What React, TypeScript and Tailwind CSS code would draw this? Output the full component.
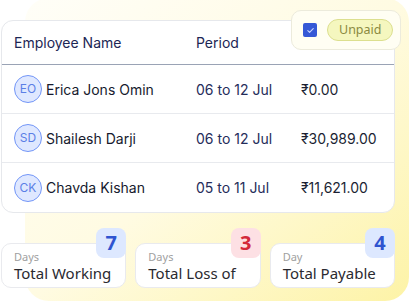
import React from "react";

interface Row {
  initials: string;
  name: string;
  period: string;
  amount: string;
}

const ROWS: Row[] = [
  { initials: "EO", name: "Erica Jons Omin", period: "06 to 12 Jul", amount: "₹0.00" },
  { initials: "SD", name: "Shailesh Darji", period: "06 to 12 Jul", amount: "₹30,989.00" },
  { initials: "CK", name: "Chavda Kishan", period: "05 to 11 Jul", amount: "₹11,621.00" },
];

const STATS = [
  { unit: "Days", label: "Total Working", value: "7", badge: "bg-[#dde8ff] text-[#2f54d0]" },
  { unit: "Days", label: "Total Loss of", value: "3", badge: "bg-[#fde0e4] text-[#d32a3a]" },
  { unit: "Day", label: "Total Payable", value: "4", badge: "bg-[#dde8ff] text-[#2f54d0]" },
];

export default function App() {
  return (
    <div className="relative w-[409px] h-[302px] overflow-hidden bg-white font-['Inter',sans-serif]">
      {/* yellow backdrop */}
      <div className="absolute left-[25px] top-[-2px] w-[384px] h-[303px] rounded-[24px] bg-gradient-to-br from-[#fffef8] via-[#fffbe2] to-[#fdf3a6]" />

      <div className="relative pt-[20px] pl-[1px] w-[395px]">
        <div className="bg-white border border-[#e6e8ec] rounded-[12px] overflow-hidden">
          <div className="grid grid-cols-[182px_105px_1fr] h-[44px] items-center px-[12px] border-b border-[#9aa3b5] text-[14px] text-[#1c2654]">
            <span>Employee Name</span>
            <span>Period</span>
            <span />
          </div>
          {ROWS.map((r, i) => (
            <div
              key={r.initials}
              className={`grid grid-cols-[182px_105px_1fr] h-[49px] items-center px-[12px] text-[14px] ${
                i < ROWS.length - 1 ? "border-b border-[#e8eaee]" : ""
              }`}
            >
              <div className="flex items-center gap-[4px]">
                <span className="w-[28px] h-[28px] rounded-full border border-[#7396f7] bg-[#dfe8ff] text-[#5b7fe6] text-[12px] flex items-center justify-center">
                  {r.initials}
                </span>
                <span className="text-[#161a2e]">{r.name}</span>
              </div>
              <span className="text-[#252c5a]">{r.period}</span>
              <span className="text-[#1b1f33]">{r.amount}</span>
            </div>
          ))}
        </div>

        <div className="grid grid-cols-3 gap-[9px] mt-[30px]">
          {STATS.map((s) => (
            <div
              key={s.label}
              className="relative h-[45px] bg-white border border-[#e9eaee] rounded-[10px] pl-[12px] pt-[7px] font-['Noto_Sans',sans-serif]"
            >
              <div className="text-[11px] leading-[12px] text-[#a0a0a0]">{s.unit}</div>
              <div className="text-[15px] leading-[20px] text-[#2a2a30]">{s.label}</div>
              <div
                className={`absolute right-[-1px] top-[-16px] w-[30px] h-[30px] rounded-[8px] flex items-center justify-center text-[20px] font-bold ${s.badge}`}
              >
                {s.value}
              </div>
            </div>
          ))}
        </div>
      </div>

      {/* unpaid filter popover */}
      <div className="absolute left-[291px] top-[10px] w-[110px] h-[40px] rounded-[10px] border border-[#ecebdc] bg-[#fffef3] flex items-center gap-[10px] pl-[11px]">
        <span className="w-[14px] h-[14px] rounded-[2px] bg-[#3558d6] flex items-center justify-center">
          <svg width="9" height="9" viewBox="0 0 10 10" fill="none">
            <path d="M2 5.2l2 2 4-4.4" stroke="#c9d4ff" strokeWidth="1.2" strokeLinecap="round" strokeLinejoin="round" />
          </svg>
        </span>
        <span className="h-[22px] px-[11px] rounded-full border border-[#dcdf8e] bg-[#f5f7bf] text-[#8b8a3f] text-[12.5px] flex items-center font-['Noto_Sans',sans-serif]">
          Unpaid
        </span>
      </div>
    </div>
  );
}
